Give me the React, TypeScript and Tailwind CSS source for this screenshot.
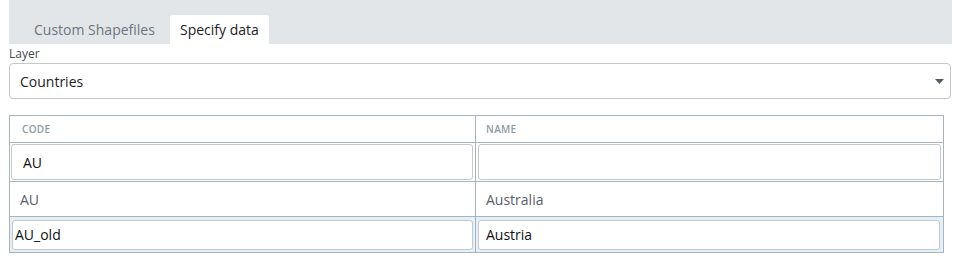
import React from "react";

export default function App() {
  const font = { fontFamily: '"Open Sans", "Noto Sans", sans-serif' };
  return (
    <div className="w-[960px] h-[263px] bg-white" style={font}>
      <div className="ml-[9px] w-[943px] h-[44px] bg-[#e3e6e9] flex items-end pl-[16px]">
        <div className="h-[29px] px-[9px] flex items-center text-[14px] text-[#6b7580]">Custom Shapefiles</div>
        <div className="h-[29px] ml-[6px] w-[99px] bg-white rounded-t-[3px] flex items-center justify-center text-[14px] text-[#1d2226]">
          Specify data
        </div>
      </div>
      <div className="ml-[9px] mt-[2px] text-[12px] leading-[16px] text-[#444b52]">Layer</div>
      <div className="ml-[9px] mt-[1px] w-[942px] h-[36px] border border-[#c3c8cc] rounded-[4px] flex items-center justify-between pl-[10px] pr-[6px]">
        <span className="text-[14px] text-[#1d2226]">Countries</span>
        <svg width="9" height="5" viewBox="0 0 9 5">
          <path d="M0 0 H9 L4.5 5 Z" fill="#555d64" />
        </svg>
      </div>
      <div className="ml-[9px] mt-[16px] w-[935px] border border-[#a9b3ba]">
        <div className="grid grid-cols-[466px_1fr] h-[27px] border-b border-[#a9b3ba]">
          <div className="border-r border-[#a9b3ba] flex items-center pl-[12px] text-[10px] font-semibold text-[#8f9aa3] tracking-[0.3px]">CODE</div>
          <div className="flex items-center pl-[10px] text-[10px] font-semibold text-[#8f9aa3] tracking-[0.3px]">NAME</div>
        </div>
        <div className="grid grid-cols-[466px_1fr] h-[39px] border-b border-[#a9b3ba]">
          <div className="border-r border-[#a9b3ba] p-[1px] pr-[2px] flex items-center">
            <div className="w-full h-[36px] border border-[#c3c8cc] rounded-[3px] flex items-center pl-[11px] text-[14px] text-[#111]">AU</div>
          </div>
          <div className="pl-[2px] pr-[2px] flex items-center">
            <div className="w-full h-[36px] border border-[#c3c8cc] rounded-[3px]"></div>
          </div>
        </div>
        <div className="grid grid-cols-[466px_1fr] h-[35px] border-b border-[#a9b3ba]">
          <div className="border-r border-[#a9b3ba] flex items-center pl-[10px] text-[14px] text-[#59616a]">AU</div>
          <div className="flex items-center pl-[10px] text-[14px] text-[#59616a]">Australia</div>
        </div>
        <div className="grid grid-cols-[466px_1fr] h-[35px] bg-[#e4eff7]">
          <div className="border-r border-[#a9b3ba] pl-[2px] pr-[2px] flex items-center">
            <div className="w-full h-[30px] bg-white border border-[#c3c8cc] rounded-[3px] flex items-center pl-[2px] text-[14px] text-[#111]">AU_old</div>
          </div>
          <div className="pl-[2px] pr-[3px] flex items-center">
            <div className="w-full h-[30px] bg-white border border-[#c3c8cc] rounded-[3px] flex items-center pl-[7px] text-[14px] text-[#111]">Austria</div>
          </div>
        </div>
      </div>
    </div>
  );
}
